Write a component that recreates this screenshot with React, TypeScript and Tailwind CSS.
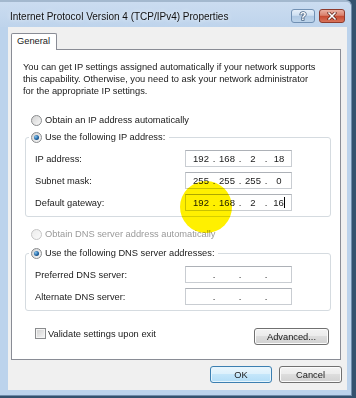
import React from "react";

const Radio = ({ checked = false, disabled = false }: { checked?: boolean; disabled?: boolean }) => (
  <span
    className={
      disabled
        ? "inline-flex w-[11px] h-[11px] rounded-full border border-[#c6c6c6] bg-[linear-gradient(135deg,#ececec,#fafafa)] shrink-0"
        : "inline-flex w-[11px] h-[11px] rounded-full border border-[#8a8c8e] bg-[linear-gradient(135deg,#d2d2d2,#f8f8f8)] items-center justify-center shrink-0"
    }
  >
    {checked && (
      <span className="w-[5px] h-[5px] rounded-full bg-[radial-gradient(circle_at_35%_35%,#86c6f0,#1f62a0_55%,#0c3862)]" />
    )}
  </span>
);

const IpBox = ({ parts, cursor = false }: { parts: string[]; cursor?: boolean }) => (
  <div className="w-[107px] h-[17px] border border-[#c9cdd2] border-t-[#adb1b7] bg-white flex items-center pl-[5px] text-[9.5px] leading-[12px] text-[#1a1a1a]">
    {parts.map((p, i) => (
      <React.Fragment key={i}>
        {i > 0 && <span className="w-[6px] text-center">.</span>}
        <span className="w-[20px] text-center whitespace-nowrap">
          {p}
          {cursor && i === 3 && <span className="inline-block w-px h-[11px] bg-black align-middle" />}
        </span>
      </React.Fragment>
    ))}
  </div>
);

const Row = ({ label, parts, cursor = false }: { label: string; parts: string[]; cursor?: boolean }) => (
  <div className="flex items-center h-[17px]">
    <span className="w-[150px] whitespace-nowrap">{label}</span>
    <IpBox parts={parts} cursor={cursor} />
  </div>
);

const Btn = ({ children, className }: { children: React.ReactNode; className: string }) => (
  <div className={className}>{children}</div>
);

export default function App() {
  const btnGray =
    "h-[17px] rounded-[3px] border border-[#707070] bg-[linear-gradient(#f3f3f3,#ebebeb_50%,#dddddd_50%,#d1d1d1)] shadow-[inset_0_0_0_1px_#fbfbfb] flex items-center justify-center text-[9.3px] leading-[12px] text-[#1a1a1a]";
  const btnBlue =
    "h-[17px] rounded-[3px] border border-[#3c7fb1] bg-[linear-gradient(#eaf6fd,#dbf0fc_50%,#c4e6fa_50%,#b2ddf7)] shadow-[inset_0_0_0_1px_#e6f5fd] flex items-center justify-center text-[9.3px] leading-[12px] text-[#1a1a1a]";

  return (
    <div className="w-[356px] h-[398px] relative overflow-hidden bg-[#34526e] font-['Liberation_Sans',Arial,sans-serif]">
      <div className="w-[352px] h-[396px] border-t-2 border-r border-b border-t-[#a3b8ce] border-r-[#6f8cab] border-b-[#6f8cab] rounded-tr-[6px] bg-[#bcd3ec] flex flex-col">
        {/* title bar */}
        <div className="h-[25px] flex items-start pl-[10px] pr-[6px] bg-[linear-gradient(#cbdcf0,#bed4ec)] rounded-tr-[5px]">
          <span className="mt-[9px] text-[10px] leading-[12px] text-[#111] whitespace-nowrap [text-shadow:0_0_5px_#ffffff]">
            Internet Protocol Version 4 (TCP/IPv4) Properties
          </span>
          <div className="ml-auto mt-[7px] flex gap-[4px]">
            <div className="w-[24px] h-[14px] rounded-[3px] border border-[#7190b3] bg-[linear-gradient(#e6eff9,#cddff1_45%,#afc8e3_50%,#bcd3ea)] flex items-center justify-center">
              <svg width="10" height="12" viewBox="0 0 10 12">
                <text
                  x="5"
                  y="10"
                  textAnchor="middle"
                  fontSize="11"
                  fontWeight="bold"
                  fontFamily="Liberation Sans, Arial, sans-serif"
                  fill="#ffffff"
                  stroke="#4d6888"
                  strokeWidth="1.6"
                  paintOrder="stroke"
                >
                  ?
                </text>
              </svg>
            </div>
            <div className="w-[26px] h-[14px] rounded-[3px] border border-[#8e3b2d] bg-[linear-gradient(#eab0a2,#d9806c_45%,#c6482f_50%,#d8735a)] flex items-center justify-center">
              <svg width="10" height="8" viewBox="0 0 10 8">
                <path d="M2 1 L8 7 M8 1 L2 7" stroke="#5a1e14" strokeWidth="3" strokeLinecap="square" />
                <path d="M2 1 L8 7 M8 1 L2 7" stroke="#ffffff" strokeWidth="1.6" strokeLinecap="square" />
              </svg>
            </div>
          </div>
        </div>

        {/* client */}
        <div className="ml-[8px] mr-[4px] h-[363px] bg-[#f0f0f0] flex flex-col pt-[6px]">
          <div className="ml-[3px] w-[46px] h-[17px] border border-b-0 border-[#898c95] rounded-t-[2px] bg-white relative z-10 -mb-px pl-[5px] pt-[1px] text-[9.3px] leading-[12px] text-[#1a1a1a]">
            General
          </div>
          <div className="ml-[3px] w-[330px] h-[311px] border border-[#898c95] bg-white flex flex-col text-[9.3px] leading-[12px] text-[#1a1a1a]">
            <div className="mt-[11px] ml-[11px] whitespace-nowrap">
              <div>You can get IP settings assigned automatically if your network supports</div>
              <div>this capability. Otherwise, you need to ask your network administrator</div>
              <div>for the appropriate IP settings.</div>
            </div>

            <div className="mt-[17px] ml-[19px] flex items-center gap-[3px] h-[12px]">
              <Radio />
              <span className="whitespace-nowrap">Obtain an IP address automatically</span>
            </div>

            <fieldset className="mt-[5px] ml-[13px] w-[306px] border border-[#d5dbe0] rounded-[3px] pl-[9px] pt-[7px] pb-[5px]">
              <legend className="-ml-[6px] pl-[2px] pr-[4px] flex items-center gap-[3px] h-[12px] bg-white">
                <Radio checked />
                <span className="whitespace-nowrap">Use the following IP address:</span>
              </legend>
              <div className="flex flex-col gap-[5px]">
                <Row label="IP address:" parts={["192", "168", "2", "18"]} />
                <Row label="Subnet mask:" parts={["255", "255", "255", "0"]} />
                <Row label="Default gateway:" parts={["192", "168", "2", "16"]} cursor />
              </div>
            </fieldset>

            <div className="mt-[11px] ml-[19px] flex items-center gap-[3px] h-[12px] text-[#9a9a9a]">
              <Radio disabled />
              <span className="whitespace-nowrap">Obtain DNS server address automatically</span>
            </div>

            <fieldset className="mt-[7px] ml-[13px] w-[306px] border border-[#d5dbe0] rounded-[3px] pl-[9px] pt-[7px] pb-[5px]">
              <legend className="-ml-[6px] pl-[2px] pr-[4px] flex items-center gap-[3px] h-[12px] bg-white">
                <Radio checked />
                <span className="whitespace-nowrap">Use the following DNS server addresses:</span>
              </legend>
              <div className="flex flex-col gap-[5px]">
                <Row label="Preferred DNS server:" parts={["", "", "", ""]} />
                <Row label="Alternate DNS server:" parts={["", "", "", ""]} />
              </div>
            </fieldset>

            <div className="mt-[17px] ml-[23px] mr-[11px] flex items-start justify-between">
              <div className="flex items-start gap-[2px]">
                <span className="w-[11px] h-[11px] border border-[#8a8c8e] bg-[linear-gradient(135deg,#cfcfcf,#f7f7f7)] shadow-[inset_0_0_0_1px_#f4f4f4] shrink-0" />
                <span className="whitespace-nowrap">Validate settings upon exit</span>
              </div>
              <Btn className={`w-[75px] ${btnGray}`}>Advanced...</Btn>
            </div>
          </div>

          <div className="mt-[6px] pr-[5px] flex justify-end gap-[7px]">
            <Btn className={`w-[62px] ${btnBlue}`}>OK</Btn>
            <Btn className={`w-[63px] ${btnGray}`}>Cancel</Btn>
          </div>
        </div>
      </div>

      {/* yellow cursor highlight */}
      <div className="absolute left-[180px] top-[181px] w-[52px] h-[52px] rounded-full bg-[#fff000] mix-blend-multiply" />
    </div>
  );
}
